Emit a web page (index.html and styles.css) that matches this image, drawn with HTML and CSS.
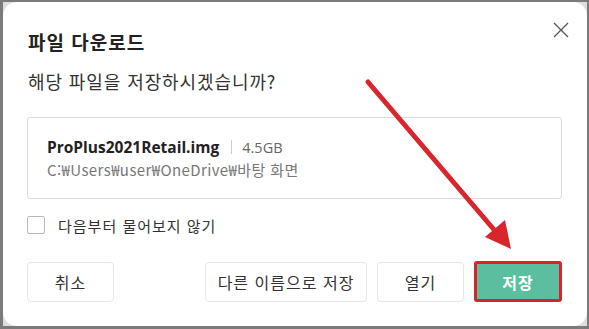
FILE: index.html
```html
<!DOCTYPE html>
<html lang="ko">
<head>
<meta charset="utf-8">
<link rel="stylesheet" href="styles.css">
</head>
<body>
<div class="frame">
  <div class="dialog">
    <div class="header">
      <h1 class="title">파일 다운로드</h1>
      <button class="close" aria-label="닫기">
        <svg width="16" height="16" viewBox="0 0 16 16"><path d="M1 1 L15 15 M15 1 L1 15" stroke="#555" stroke-width="1.3" fill="none"/></svg>
      </button>
    </div>
    <p class="question">해당 파일을 저장하시겠습니까?</p>
    <div class="filebox">
      <div class="fileline"><span class="fname">ProPlus2021Retail.img</span><span class="sep"></span><span class="fsize">4.5GB</span></div>
      <div class="fpath">C:₩Users₩user₩OneDrive₩바탕 화면</div>
    </div>
    <label class="check"><span class="box"></span><span class="clabel">다음부터 물어보지 않기</span></label>
    <div class="actions">
      <button class="btn btn-cancel">취소</button>
      <div class="right">
        <button class="btn btn-saveas">다른 이름으로 저장</button>
        <button class="btn btn-open">열기</button>
        <button class="btn btn-save">저장</button>
      </div>
    </div>
  </div>
  <svg class="arrow" width="589" height="329" viewBox="0 0 589 329">
    <line x1="368" y1="82" x2="496" y2="232" stroke="#d9252c" stroke-width="5" stroke-linecap="round"/>
    <polygon points="511,249 485,237 505,220" fill="#d9252c"/>
  </svg>
</div>
</body>
</html>
```
FILE: styles.css
```css
* { box-sizing: border-box; }
html, body { margin: 0; padding: 0; }
body {
  width: 589px;
  height: 329px;
  overflow: hidden;
  font-family: "Noto Sans CJK KR", "Noto Sans", sans-serif;
}
.frame {
  position: relative;
  width: 589px;
  height: 329px;
  background: #dedede;
  border-style: solid;
  border-color: #7b7b7b;
  border-width: 2px 2px 3px 3px;
}
.dialog {
  width: 584px;
  height: 324px;
  background: #fff;
  border-radius: 14px;
  padding: 0 25px 0 24px;
  display: flex;
  flex-direction: column;
}
.header {
  display: flex;
  justify-content: space-between;
  align-items: flex-start;
  height: 66px;
}
.title {
  margin: 26px 0 0 1px;
  font-size: 19px;
  line-height: 28px;
  font-weight: 700;
  color: #222;
  letter-spacing: 1px;
}
.close {
  margin: 20px -7px 0 0;
  padding: 0;
  border: 0;
  background: none;
  width: 16px;
  height: 16px;
}
.close svg { display: block; }
.question {
  margin: 0 0 0 1px;
  font-size: 18px;
  line-height: 26px;
  color: #333;
  letter-spacing: 0.9px;
}
.filebox {
  margin-top: 23px;
  height: 82px;
  border: 1px solid #dcdcdc;
  border-radius: 3px;
  padding: 18px 19px 0;
}
.fileline {
  display: flex;
  align-items: center;
  height: 22px;
}
.fname {
  font-family: "Open Sans", "Noto Sans", sans-serif;
  font-weight: 700;
  font-size: 15.5px;
  color: #222;
}
.sep {
  width: 1px;
  height: 14px;
  background: #ccc;
  margin: 0 10px 0 12px;
}
.fsize {
  font-family: "Open Sans", sans-serif;
  font-size: 14.5px;
  color: #666;
}
.fpath {
  margin-top: 2px;
  font-size: 15px;
  line-height: 20px;
  color: #777;
  letter-spacing: 0.4px;
}
.check {
  display: flex;
  align-items: center;
  margin-top: 17px;
  height: 18px;
}
.box {
  width: 18px;
  height: 18px;
  border: 1px solid #b9b9b9;
  border-radius: 2px;
  background: #fff;
}
.clabel {
  margin-left: 13px;
  font-size: 15px;
  color: #333;
  letter-spacing: 1px;
}
.actions {
  display: flex;
  justify-content: space-between;
  margin-top: 28px;
}
.right { display: flex; gap: 10px; }
.btn {
  height: 40px;
  border: 1px solid #e6e6e6;
  border-radius: 4px;
  background: #fff;
  font-family: "Noto Sans CJK KR", sans-serif;
  font-size: 16px;
  color: #333;
  padding: 0;
  letter-spacing: 1px;
}
.btn-cancel { width: 87px; }
.btn-saveas { width: 162px; }
.btn-open { width: 87px; }
.btn-save {
  width: 88px;
  height: 41px;
  margin-top: -1px;
  background: #5bbf9f;
  border: 3px solid #d8232a;
  border-radius: 3px;
  color: #fff;
  font-weight: 700;
}
.arrow {
  position: absolute;
  left: -3px;
  top: -2px;
  pointer-events: none;
}
```
